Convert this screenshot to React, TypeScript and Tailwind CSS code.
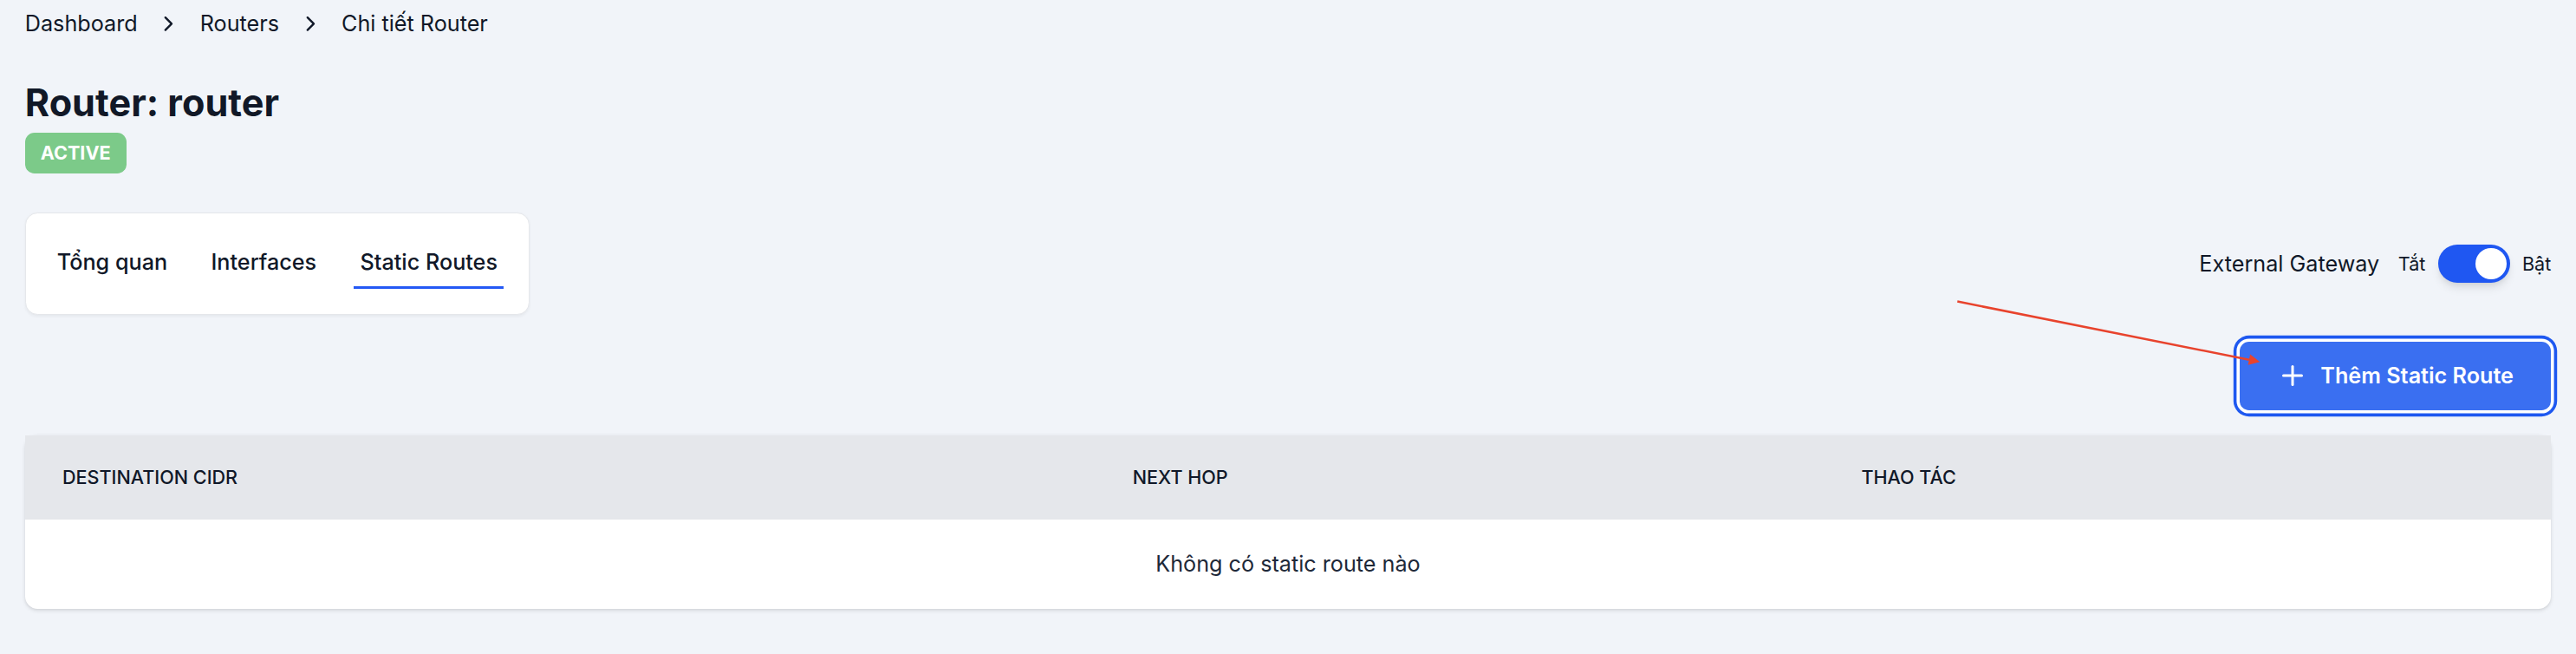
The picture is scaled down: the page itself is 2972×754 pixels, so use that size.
import { ChevronRight, Plus } from "lucide-react";

const CRUMBS = ["Dashboard", "Routers", "Chi tiết Router"];
const TABS = ["Tổng quan", "Interfaces", "Static Routes"];

function Breadcrumb() {
  return (
    <nav className="flex h-5 items-center gap-3 text-sm text-gray-900">
      {CRUMBS.map((c, i) => (
        <div key={c} className="flex items-center gap-3">
          {i > 0 ? <ChevronRight size={16} strokeWidth={2} className="text-gray-900" /> : null}
          <span>{c}</span>
        </div>
      ))}
    </nav>
  );
}

function Tabs({ active }: { active: string }) {
  return (
    <div className="flex gap-5 rounded-lg border border-gray-200 bg-white p-4 shadow-xs">
      {TABS.map((t) => (
        <button
          key={t}
          className={
            t === active
              ? "border-b-2 border-[#2459f5] px-1 pt-[5px] pb-[6px] text-sm font-medium text-gray-900"
              : "border-b-2 border-transparent px-1 pt-[5px] pb-[6px] text-sm font-medium text-gray-900"
          }
        >
          {t}
        </button>
      ))}
    </div>
  );
}

function GatewayToggle() {
  return (
    <div className="flex items-center gap-3">
      <span className="text-sm text-gray-900">External Gateway</span>
      <div className="flex items-center gap-2 text-xs text-gray-900">
        <span>Tắt</span>
        <div className="flex h-6 w-[46px] items-center justify-end rounded-full bg-[#1f57f2] p-0.5 shadow-md">
          <div className="size-5 rounded-full bg-white" />
        </div>
        <span>Bật</span>
      </div>
    </div>
  );
}

function RoutesTable() {
  return (
    <div className="mt-4 rounded-lg bg-white shadow-sm">
      <table className="w-full table-fixed">
        <thead>
          <tr className="h-[54px] bg-[#e5e7eb]">
            <th className="w-[686px] px-6 text-left text-xs font-medium uppercase text-gray-900">
              Destination CIDR
            </th>
            <th className="w-[467px] px-6 text-left text-xs font-medium uppercase text-gray-900">
              Next Hop
            </th>
            <th className="px-6 text-left text-xs font-medium uppercase text-gray-900">
              Thao tác
            </th>
          </tr>
        </thead>
        <tbody>
          <tr className="h-[57px]">
            <td colSpan={3} className="px-6 text-center text-sm text-gray-800">
              Không có static route nào
            </td>
          </tr>
        </tbody>
      </table>
    </div>
  );
}

export default function App() {
  return (
    <div className="relative min-h-[419px] bg-[#f1f4f9] px-4 pt-[5px] font-['Inter',sans-serif] text-gray-900 [zoom:1.8]">
      <Breadcrumb />

      <h1 className="mt-[25px] text-2xl leading-8 font-bold text-[#111827]">Router: router</h1>
      <span className="mt-[3px] inline-flex h-[26px] items-center rounded-md bg-[#7cca89] px-2.5 text-xs font-bold text-white">
        ACTIVE
      </span>

      <div className="mt-[25px] flex items-center justify-between">
        <Tabs active="Static Routes" />
        <GatewayToggle />
      </div>

      <div className="mt-[17px] flex justify-end">
        <button className="flex items-center gap-2 rounded-md bg-[#3a6ff1] px-6 py-3 text-sm font-semibold text-white ring-2 ring-[#1e58f0] ring-offset-2 ring-offset-white">
          <Plus size={20} strokeWidth={2} />
          Thêm Static Route
        </button>
      </div>

      <RoutesTable />

      {/* annotation arrow drawn over the page */}
      <svg
        className="pointer-events-none absolute top-0 left-0"
        width={1651}
        height={419}
        viewBox="0 0 1651 419"
      >
        <line x1={1254.6} y1={193.1} x2={1441.6} y2={230.4} stroke="#e8432d" strokeWidth={1.4} />
        <polygon points="1448.5,231.8 1442.3,227.0 1440.9,233.8" fill="#e8432d" />
      </svg>
    </div>
  );
}
